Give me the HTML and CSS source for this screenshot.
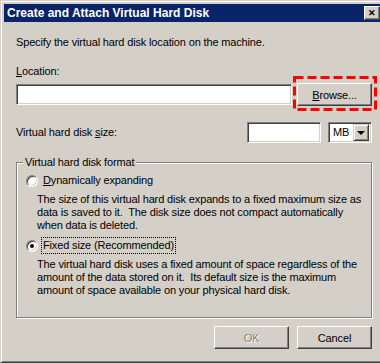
FILE: index.html
```html
<!DOCTYPE html>
<html lang="en">
  <head>
    <meta charset="UTF-8" />
    <title>Create and Attach Virtual Hard Disk</title>
    <link rel="stylesheet" href="styles.css">
  </head>
  <body>
    <div class="window">
      <div class="titlebar">
        <span class="title">Create and Attach Virtual Hard Disk</span>
        <button class="close-btn">&#x2715;</button>
      </div>

      <div class="content">
        <p class="intro">Specify the virtual hard disk location on the machine.</p>

        <label class="label"><u>L</u>ocation:</label>
        <div class="row">
          <input type="text" class="field location" />
          <div class="browse-wrap">
            <button class="btn"><u>B</u>rowse...</button>
            <!-- red highlight drawn over the button -->
            <svg class="highlight" width="84" height="35" viewBox="0 0 84 35">
              <rect x="1.5" y="1.5" width="81" height="32" fill="none" stroke="#ff0000" stroke-width="3" stroke-dasharray="9 4" />
            </svg>
          </div>
        </div>

        <div class="row size-row">
          <span class="label">Virtual hard disk <u>s</u>ize:</span>
          <div class="size-inputs">
            <input type="text" class="field size" />
            <div class="field select">
              <span>MB</span>
              <span class="drop-btn"><span class="arrow"></span></span>
            </div>
          </div>
        </div>

        <fieldset class="group">
          <legend>Virtual hard disk format</legend>

          <div class="option">
            <span class="radio"></span>
            <span><u>D</u>ynamically expanding</span>
          </div>
          <p class="desc">
            The size of this virtual hard disk expands to a fixed maximum size as<br>
            data is saved to it.&nbsp; The disk size does not compact automatically<br>
            when data is deleted.
          </p>

          <div class="option">
            <span class="radio checked"></span>
            <span class="focus">Fixed size (Recommended)</span>
          </div>
          <p class="desc">
            The virtual hard disk uses a fixed amount of space regardless of the<br>
            amount of the data stored on it.&nbsp; Its default size is the maximum<br>
            amount of space available on your physical hard disk.
          </p>
        </fieldset>

        <div class="actions">
          <button class="btn" disabled>OK</button>
          <button class="btn">Cancel</button>
        </div>
      </div>
    </div>
  </body>
</html>
```

FILE: styles.css
```css
* {
  padding: 0px;
  margin: 0px;
  box-sizing: border-box;
  font-family: "Liberation Sans", Arial, sans-serif;
  font-size: 11px;
}

body {
  background-color: #d4d0c8;
  overflow: hidden;
}

.window {
  width: 384px;
  height: 363px;
  background-color: #d4d0c8;
  border: 1px solid;
  border-color: #d4d0c8 #404040 #404040 #d4d0c8;
  box-shadow: inset 1px 1px 0 #fff, inset -1px -1px 0 #808080;
  padding: 3px;
}

.titlebar {
  height: 18px;
  background-color: #0a246a;
  display: flex;
  align-items: center;
  padding-left: 3px;
}

.title {
  color: #fff;
  font-weight: bold;
  font-size: 12px;
}

.close-btn {
  margin-left: auto;
  margin-right: 0px;
  width: 16px;
  height: 14px;
  background-color: #d4d0c8;
  border: 1px solid;
  border-color: #fff #404040 #404040 #fff;
  box-shadow: inset -1px -1px 0 #808080;
  font-size: 9px;
  font-weight: bold;
  line-height: 11px;
  color: #000;
}

.content {
  padding: 0 8px 0 12px;
  color: #000;
  line-height: 13px;
}

.content,
.content * {
  letter-spacing: -0.15px;
}

.intro {
  margin-top: 14px;
}

.label {
  display: block;
  margin-top: 16px;
}

.row {
  display: flex;
  align-items: center;
  justify-content: space-between;
  margin-top: 5px;
}

.size-row {
  margin-top: 16px;
}

.size-row .label {
  margin-top: 0;
}

.field {
  height: 21px;
  background-color: #fff;
  border: 1px solid;
  border-color: #808080 #fff #fff #808080;
  box-shadow: inset 1px 1px 0 #404040, inset -1px -1px 0 #d4d0c8;
  outline: none;
}

.location {
  width: 276px;
}

.browse-wrap {
  position: relative;
}

.highlight {
  position: absolute;
  left: -4px;
  top: -7px;
}

.btn {
  display: block;
  width: 75px;
  height: 23px;
  background-color: #d4d0c8;
  border: 1px solid;
  border-color: #fff #404040 #404040 #fff;
  box-shadow: inset -1px -1px 0 #808080;
  color: #000;
}

.btn:disabled {
  color: #808080;
  text-shadow: 1px 1px 0 #fff;
}

.size-inputs {
  display: flex;
  gap: 7px;
}

.size {
  width: 74px;
}

.select {
  width: 44px;
  display: flex;
  align-items: center;
  justify-content: space-between;
  padding: 2px;
  padding-left: 4px;
}

.drop-btn {
  width: 16px;
  height: 17px;
  background-color: #d4d0c8;
  border: 1px solid;
  border-color: #d4d0c8 #404040 #404040 #d4d0c8;
  box-shadow: inset 1px 1px 0 #fff, inset -1px -1px 0 #808080;
  display: flex;
  align-items: center;
  justify-content: center;
}

.arrow {
  width: 0;
  height: 0;
  border-left: 4px solid transparent;
  border-right: 4px solid transparent;
  border-top: 4px solid #000;
}

.group {
  margin-top: 13px;
  border: 1px solid #808080;
  box-shadow: inset 1px 1px 0 #fff, 1px 1px 0 #fff;
  padding: 0 0 20px 0;
}

.group legend {
  margin-left: 6px;
  padding: 0 2px;
  background-color: #d4d0c8;
}

.option {
  display: flex;
  align-items: center;
  gap: 5px;
  margin-top: 5px;
  padding-left: 9px;
}

.radio {
  width: 12px;
  height: 12px;
  border-radius: 50%;
  background-color: #fff;
  border: 1px solid;
  border-color: #808080 #fff #fff #808080;
  box-shadow: inset 1px 1px 0 #404040, inset -1px -1px 0 #d4d0c8;
  display: flex;
  align-items: center;
  justify-content: center;
}

.checked::after {
  content: "";
  width: 4px;
  height: 4px;
  border-radius: 50%;
  background-color: #000;
}

.focus {
  outline: 1px dotted #000;
  outline-offset: 1px;
}

.desc {
  margin-top: 6px;
  padding-left: 20px;
  white-space: nowrap;
}

.desc + .option {
  margin-top: 7px;
}

.actions {
  display: flex;
  justify-content: flex-end;
  gap: 8px;
  margin-top: 8px;
}
```
